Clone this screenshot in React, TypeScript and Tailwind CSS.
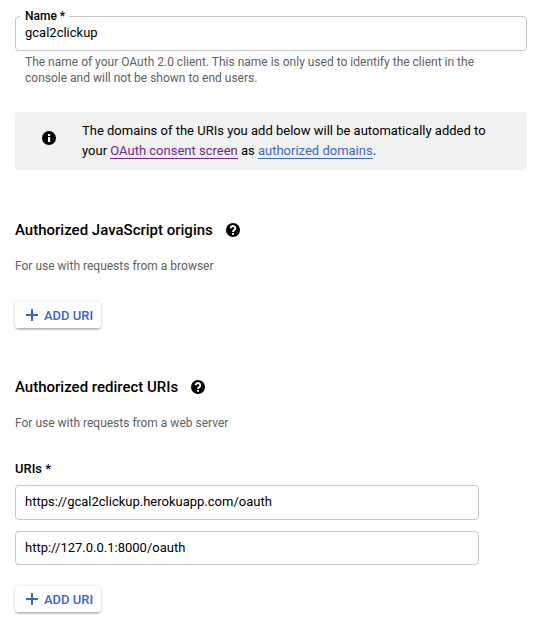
import React from 'react';

function Help() {
  return (
    <svg className="size-[14px]" viewBox="0 0 14 14" fill="none">
      <circle cx="7" cy="7" r="7" fill="#000" />
      <path d="M4.600 5.300a2.350 2.200 0 1 1 3.700 1.800C7.500 7.700 7 7.950 7 8.900" stroke="#fff" strokeWidth="1.900" />
      <path d="M6 9.900h2v1.800H6z" fill="#fff" />
    </svg>
  );
}

function AddButton() {
  return (
    <button className="flex h-[26px] w-[86px] items-center gap-[6px] rounded-[3px] bg-white pl-[11px] text-[13px] font-medium text-[#3b68c4] shadow-[0_2px_3px_-1px_rgba(0,0,0,0.4),0_0_3px_rgba(0,0,0,0.14)]">
      <svg className="size-3" viewBox="0 0 12 12" stroke="#3b68c4" strokeWidth="2">
        <path d="M6 0v12M0 6h12" />
      </svg>
      <span className="pt-[2px] leading-4">ADD URI</span>
    </button>
  );
}

export default function App() {
  return (
    <main className="h-[633px] w-[556px] overflow-hidden bg-white pt-4 pl-[15px] font-['Roboto',sans-serif] text-[13px] text-black">
      <div className="relative flex h-[35px] w-[512px] items-center rounded-[4px] border border-[#c6c6c6] pb-[2px] pl-[9px]">
        <span className="absolute -top-[8px] left-[4px] bg-white pr-[4px] pl-[5px] text-[12px] leading-[14px] font-medium">Name *</span>
        <span>gcal2clickup</span>
      </div>
      <p className="mt-[3px] pl-[10px] text-[12px] leading-4 text-[#616161]">
        The name of your OAuth 2.0 client. This name is only used to identify the client in the
        <br />
        console and will not be shown to end users.
      </p>
      <div className="mt-[26px] flex h-[58px] w-[512px] items-center rounded-[3px] bg-[#f1f1f1] pl-[27px]">
        <svg className="mt-[-6px] size-[14px]" viewBox="0 0 14 14">
          <circle cx="7" cy="7" r="7" fill="#000" />
          <path d="M6 3h2.200v2H6zM6 6h2.200v5H6z" fill="#fff" />
        </svg>
        <p className="ml-[26px] leading-5">
          The domains of the URIs you add below will be automatically added to
          <br />
          your <a className="border-b border-[#71278f] text-[#71278f]">OAuth consent screen</a> as <a className="border-b border-[#3b68c4] text-[#3b68c4]">authorized domains</a>.
        </p>
      </div>
      <h2 className="mt-[50px] flex h-5 items-center gap-[13px] text-[15px] font-medium">Authorized JavaScript origins <Help /></h2>
      <p className="mt-[18px] text-[12px] leading-4 text-[#616161]">For use with requests from a browser</p>
      <div className="mt-7 h-[27px]"><AddButton /></div>
      <h2 className="mt-[48px] flex h-5 items-center gap-[13px] text-[15px] font-medium">Authorized redirect URIs <Help /></h2>
      <p className="mt-[18px] text-[12px] leading-4 text-[#616161]">For use with requests from a web server</p>
      <p className="mt-[30px] text-[13px] leading-4 font-medium">URIs *</p>
      <div className="mt-[8px] flex flex-col gap-[11px]">
        <div className="flex h-[35px] w-[464px] items-center rounded-[4px] border border-[#c6c6c6] pb-[2px] pl-[9px]">https://gcal2clickup.herokuapp.com/oauth</div>
        <div className="flex h-[34px] w-[464px] items-center rounded-[4px] border border-[#c6c6c6] pb-px pl-[9px]">http://127.0.0.1:8000/oauth</div>
      </div>
      <div className="mt-[21px]"><AddButton /></div>
    </main>
  );
}
